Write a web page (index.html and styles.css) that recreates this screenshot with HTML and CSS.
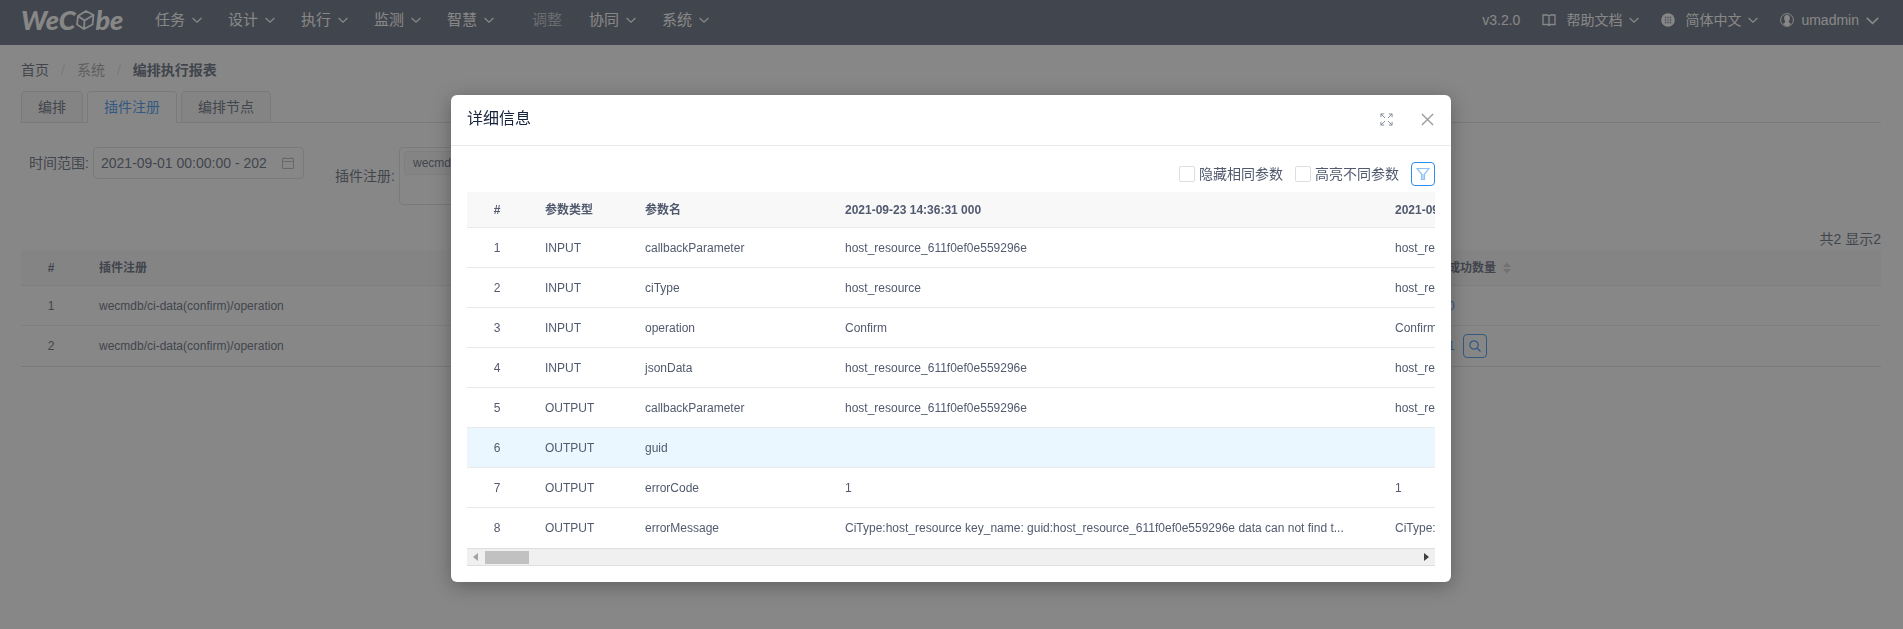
FILE: index.html
```html
<!DOCTYPE html>
<html lang="zh-CN">
<head>
<meta charset="utf-8">
<title>WeCube</title>
<link rel="stylesheet" href="styles.css">
</head>
<body>
<svg class="sprite" aria-hidden="true">
  <symbol id="down" viewBox="0 0 10 10"><path d="M.6 3l4.400 4.200L9.400 3" fill="none" stroke="currentColor" stroke-width="1.300"/></symbol>
</svg>
<div class="page">
  <header class="topbar">
    <a class="logo" href="#">WeC<svg class="logo-cube" viewBox="0 0 20 22" aria-hidden="true"><path d="M11 2l7.500 4-1 9.500L9 20l-7-4.500L3 7zM3 7l6.500 4.500 9-5.500M9.500 11.500L9 20" fill="none" stroke="currentColor" stroke-width="1.800" stroke-linejoin="round"/></svg>be</a>
    <nav class="menu">
      <a class="menu-item" href="#">任务<svg class="arrow"><use href="#down"/></svg></a>
      <a class="menu-item" href="#">设计<svg class="arrow"><use href="#down"/></svg></a>
      <a class="menu-item" href="#">执行<svg class="arrow"><use href="#down"/></svg></a>
      <a class="menu-item" href="#">监测<svg class="arrow"><use href="#down"/></svg></a>
      <a class="menu-item" href="#">智慧<svg class="arrow"><use href="#down"/></svg></a>
      <a class="menu-item menu-item-off" href="#">调整</a>
      <a class="menu-item" href="#">协同<svg class="arrow"><use href="#down"/></svg></a>
      <a class="menu-item" href="#">系统<svg class="arrow"><use href="#down"/></svg></a>
    </nav>
    <div class="tools">
      <span>v3.2.0</span>
      <a class="tool" href="#"><svg class="tool-icon" viewBox="0 0 14 14"><path d="M1 2h4.500L7 3l1.500-1H13v9.500H8.500L7 12.500l-1.500-1H1zM7 3v9.500" fill="none" stroke="currentColor" stroke-width="1.300"/></svg>帮助文档<svg class="arrow arrow-near"><use href="#down"/></svg></a>
      <a class="tool" href="#"><svg class="tool-icon" viewBox="0 0 14 14"><circle cx="7" cy="7" r="6.800" fill="currentColor"/><path d="M7 3v8M3 7h8M3.500 4.500h7M3.500 9.500h7M4.500 3v8M9.500 3v8" fill="none" stroke="#515a6e" stroke-width=".4"/></svg>简体中文<svg class="arrow arrow-near"><use href="#down"/></svg></a>
      <a class="tool tool-user" href="#"><svg class="tool-icon" viewBox="0 0 14 14"><circle cx="7" cy="7" r="6.400" fill="none" stroke="currentColor" stroke-width="1"/><path d="M7 2c2.200 0 3 1.500 2.800 3.500C9.700 7 9 8 8.700 8.500c0 1.500 1 1.200 2.300 2.200C10 12.500 8.500 13 7 13s-3-.5-4-2.300c1.300-1 2.300-.7 2.300-2.200C5 8 4.300 7 4.200 5.500 4 3.500 4.800 2 7 2z" fill="currentColor"/></svg>umadmin<svg class="arrow arrow-wide"><use href="#down"/></svg></a>
    </div>
  </header>

  <main class="content">
    <nav class="crumbs">
      <a class="crumb-link" href="#">首页</a><span class="slash">/</span><span class="crumb-off">系统</span><span class="slash">/</span><b>编排执行报表</b>
    </nav>
    <div class="tabs" role="tablist">
      <button class="tab" role="tab">编排</button>
      <button class="tab tab-active" role="tab" aria-selected="true">插件注册</button>
      <button class="tab" role="tab">编排节点</button>
    </div>
    <form class="filters">
      <div class="field">
        <label class="field-label" for="range">时间范围:</label>
        <span class="date-box">
          <input class="date-input" id="range" type="text" value="2021-09-01 00:00:00 - 202">
          <svg class="calendar" viewBox="0 0 14 14"><path d="M1.500 2.500h11v10h-11zM1.500 5.500h11M3.500 1v2M10.500 1v2" fill="none" stroke="currentColor"/></svg>
        </span>
      </div>
      <div class="field field-tall">
        <span class="field-label" id="plugin-label">插件注册:</span>
        <div class="multi" role="listbox" aria-labelledby="plugin-label"><span class="tag">wecmdb/ci-data(confirm)/operation</span></div>
      </div>
    </form>
    <p class="count">共2 显示2</p>
    <table class="grid">
      <colgroup><col class="c-index"><col><col class="c-success"></colgroup>
      <thead><tr><th class="mid">#</th><th>插件注册</th><th>成功数量<svg class="sort" viewBox="0 0 8 12"><path d="M0 5l4-4.500L8 5zM0 7h8l-4 4.500z" fill="currentColor"/></svg></th></tr></thead>
      <tbody>
        <tr><td class="mid">1</td><td>wecmdb/ci-data(confirm)/operation</td><td><a class="num" href="#">0</a></td></tr>
        <tr><td class="mid">2</td><td>wecmdb/ci-data(confirm)/operation</td><td><div class="num-cell"><a class="num" href="#">1</a><button class="icon-btn" aria-label="查看"><svg class="btn-icon" viewBox="0 0 14 14"><circle cx="6" cy="6" r="4.200" fill="none" stroke="currentColor" stroke-width="1.200"/><path d="M9 9l3.500 3.500" stroke="currentColor" stroke-width="1.400"/></svg></button></div></td></tr>
      </tbody>
    </table>
  </main>
</div>

<div class="mask">
  <section class="modal" role="dialog" aria-labelledby="modal-title">
    <header class="modal-head">
      <h2 class="modal-title" id="modal-title">详细信息</h2>
      <button class="plain-btn" aria-label="全屏"><svg class="head-icon" viewBox="0 0 14 14"><path d="M1 4.500V1h3.500M9.500 1H13v3.500M13 9.500V13H9.500M4.500 13H1V9.500M1 1l4.500 4.500M13 1L8.500 5.500M13 13L8.500 8.500M1 13l4.500-4.500" fill="none" stroke="currentColor"/></svg></button>
      <button class="plain-btn plain-btn-close" aria-label="关闭"><svg class="head-icon" viewBox="0 0 14 14"><path d="M1 1l12 12M13 1L1 13" fill="none" stroke="currentColor" stroke-width="1.400"/></svg></button>
    </header>
    <div class="modal-body">
      <div class="options">
        <label class="check"><input class="check-box" type="checkbox">隐藏相同参数</label>
        <label class="check"><input class="check-box" type="checkbox">高亮不同参数</label>
        <button class="icon-btn" aria-label="筛选"><svg class="btn-icon btn-icon-pale" viewBox="0 0 14 14"><path d="M1 1.500h12L8.500 7v5.500h-3V7z" fill="none" stroke="currentColor" stroke-width="1.200"/><path d="M5.500 7h3v5.500h-3z" fill="currentColor" opacity=".6"/></svg></button>
      </div>
      <div class="scroller">
        <table class="grid detail">
          <colgroup><col class="c-index"><col class="c-type"><col class="c-name"><col class="c-value"><col class="c-value"></colgroup>
          <thead><tr><th class="mid">#</th><th>参数类型</th><th>参数名</th><th>2021-09-23 14:36:31 000</th><th>2021-09-23</th></tr></thead>
          <tbody>
            <tr><td class="mid">1</td><td>INPUT</td><td>callbackParameter</td><td>host_resource_611f0ef0e559296e</td><td>host_resource</td></tr>
            <tr><td class="mid">2</td><td>INPUT</td><td>ciType</td><td>host_resource</td><td>host_resource</td></tr>
            <tr><td class="mid">3</td><td>INPUT</td><td>operation</td><td>Confirm</td><td>Confirm</td></tr>
            <tr><td class="mid">4</td><td>INPUT</td><td>jsonData</td><td>host_resource_611f0ef0e559296e</td><td>host_resource</td></tr>
            <tr><td class="mid">5</td><td>OUTPUT</td><td>callbackParameter</td><td>host_resource_611f0ef0e559296e</td><td>host_resource</td></tr>
            <tr class="hover"><td class="mid">6</td><td>OUTPUT</td><td>guid</td><td></td><td></td></tr>
            <tr><td class="mid">7</td><td>OUTPUT</td><td>errorCode</td><td>1</td><td>1</td></tr>
            <tr><td class="mid">8</td><td>OUTPUT</td><td>errorMessage</td><td>CiType:host_resource key_name: guid:host_resource_611f0ef0e559296e data can not find t...</td><td>CiType:host_resource</td></tr>
          </tbody>
        </table>
      </div>
      <div class="scrollbar" aria-hidden="true">
        <svg class="bar-arrow" viewBox="0 0 5 8"><path d="M5 0v8L0 4z" fill="#a3a3a3"/></svg>
        <span class="thumb"></span>
        <svg class="bar-arrow bar-arrow-right" viewBox="0 0 5 8"><path d="M0 0v8l5-4z" fill="#404040"/></svg>
      </div>
    </div>
  </section>
</div>
</body>
</html>
```
FILE: styles.css
```css
* { box-sizing: border-box; }

body {
  margin: 0;
  font: 14px/20px "Liberation Sans", "Noto Sans CJK SC", sans-serif;
  color: #515a6e;
  background: #fff;
}

a { color: inherit; text-decoration: none; }
button, input { font: inherit; color: inherit; margin: 0; }
.sprite { display: none; }
.page { min-height: 100vh; overflow: hidden; }

/* top bar */
.topbar {
  display: flex;
  align-items: center;
  height: 45px;
  padding: 0 24px 5px 21px;
  background: #515a6e;
  color: #fff;
}
.logo {
  display: flex;
  align-items: center;
  width: 108px;
  margin-right: 26px;
  font: italic 900 27px/28px Lato, sans-serif;
}
.logo-cube { width: 20px; height: 22px; }
.menu { display: flex; gap: 26px; font-size: 15px; }
.menu-item { display: flex; align-items: center; gap: 7px; }
.menu-item-off { padding: 0 1px 0 12px; color: #b8bbc2; }
.arrow { width: 10px; height: 10px; }
.tools { display: flex; align-items: center; gap: 22px; margin-left: auto; }
.tool { display: flex; align-items: center; gap: 10px; }
.tool-user { gap: 7px; }
.tool-icon { width: 14px; height: 14px; }
.arrow-near { margin-left: -3px; }
.arrow-wide { width: 13px; height: 13px; }

/* page content */
.content { padding: 15px 22px 0 21px; }
.crumbs { display: flex; line-height: 20px; }
.slash { margin: 0 12px; color: #dcdee2; }
.crumb-off { color: #999; }
.tabs {
  display: flex;
  gap: 4px;
  margin-top: 11px;
  border-bottom: 1px solid #dcdee2;
}
.tab {
  height: 32px;
  margin-bottom: -1px;
  padding: 0 16px;
  border: 1px solid #dcdee2;
  border-radius: 4px 4px 0 0;
  background: #f8f8f9;
}
.tab-active { background: #fff; border-bottom-color: #fff; color: #2d8cf0; }
.filters { display: flex; gap: 31px; padding: 24px 8px 0; }
.field { display: flex; align-items: center; gap: 4px; height: 32px; }
.field-tall { height: 58px; }
.field-label { width: 60px; white-space: nowrap; }
.date-box { position: relative; display: flex; }
.date-input {
  width: 211px;
  height: 32px;
  padding: 0 32px 0 7px;
  border: 1px solid #dcdee2;
  border-radius: 4px;
  background: #fff;
}
.calendar { position: absolute; right: 9px; top: 9px; width: 14px; height: 14px; color: #b0b4bc; }
.multi { width: 212px; height: 58px; padding: 3px 4px; border: 1px solid #dcdee2; border-radius: 4px; }
.tag {
  display: block;
  overflow: hidden;
  height: 24px;
  padding: 0 8px;
  border: 1px solid #e8eaec;
  border-radius: 3px;
  background: #f7f7f7;
  font-size: 12px;
  line-height: 22px;
}
.count { margin: 24px 0 1px; text-align: right; }

/* tables */
.grid {
  width: 100%;
  table-layout: fixed;
  border-collapse: separate;
  border-spacing: 0;
  border-bottom: 1px solid #dcdee2;
  font-size: 12px;
  line-height: 18px;
}
.grid th, .grid td {
  height: 40px;
  padding: 0 18px;
  border-bottom: 1px solid #e8eaec;
  text-align: left;
  white-space: nowrap;
  overflow: hidden;
}
.grid th { height: 36px; background: #f8f8f9; }
.grid tbody tr:last-child td { border-bottom: 0; }
.grid .mid { padding: 0; text-align: center; }
.c-index { width: 60px; }
.c-success { width: 451px; }
.c-type { width: 100px; }
.c-name { width: 200px; }
.c-value { width: 550px; }
.sort { width: 8px; height: 12px; margin-left: 7px; vertical-align: -2px; color: #c5c8ce; }
.num { color: #2d8cf0; }
.num-cell { display: flex; align-items: center; gap: 8px; }
.icon-btn {
  display: grid;
  place-items: center;
  width: 24px;
  height: 24px;
  padding: 0;
  border: 1px solid #2d8cf0;
  border-radius: 4px;
  background: transparent;
  color: #2d8cf0;
}
.btn-icon { width: 14px; height: 14px; }
.btn-icon-pale { color: #8fc3f8; }

/* dialog */
.mask {
  position: fixed;
  inset: 0;
  padding: 95px 1px 0 0;
  background: rgba(55, 55, 55, .6);
}
.modal {
  width: 1000px;
  max-width: 100%;
  margin: 0 auto;
  border-radius: 6px;
  background: #fff;
  box-shadow: 0 4px 20px rgba(0, 0, 0, .3);
}
.modal-head {
  display: flex;
  align-items: center;
  gap: 28px;
  padding: 14px 17px 16px 16px;
  border-bottom: 1px solid #e8eaec;
}
.modal-title { flex: 1; margin: 0; font-size: 16px; font-weight: 400; line-height: 20px; color: #17233d; }
.plain-btn { display: flex; padding: 0; border: 0; background: none; color: #808695; }
.plain-btn-close { color: #999; }
.head-icon { width: 13px; height: 13px; }
.modal-body { padding: 16px; }
.options { display: flex; justify-content: flex-end; align-items: center; gap: 12px; margin-bottom: 6px; }
.check { display: flex; align-items: center; gap: 4px; }
.check-box { appearance: none; width: 16px; height: 16px; border: 1px solid #dcdee2; border-radius: 2px; background: #fff; }
.scroller { overflow: hidden; }
.detail { width: 1460px; }
.hover td { background: #ebf7ff; }
.scrollbar {
  display: flex;
  align-items: center;
  gap: 7px;
  height: 17px;
  padding: 0 6px;
  border-bottom: 1px solid #dcdee2;
  background: #f0f0f0;
}
.bar-arrow { width: 5px; height: 8px; }
.bar-arrow-right { margin-left: auto; }
.thumb { width: 44px; height: 13px; background: #c1c1c1; }
```
